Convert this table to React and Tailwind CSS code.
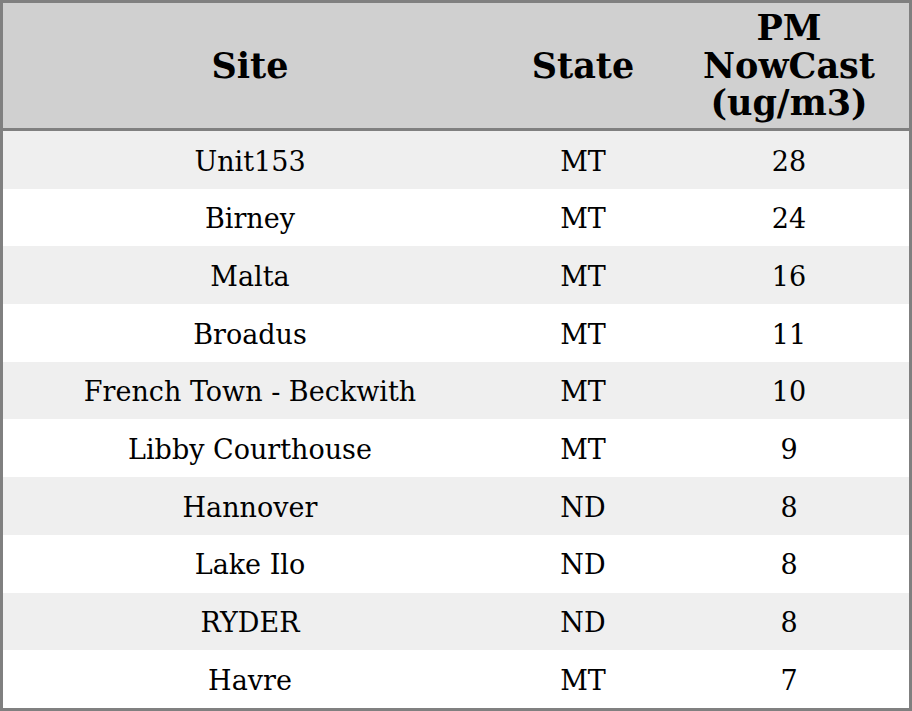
import React from 'react';

const rows = [
  ['Unit153', 'MT', 28],
  ['Birney', 'MT', 24],
  ['Malta', 'MT', 16],
  ['Broadus', 'MT', 11],
  ['French Town - Beckwith', 'MT', 10],
  ['Libby Courthouse', 'MT', 9],
  ['Hannover', 'ND', 8],
  ['Lake Ilo', 'ND', 8],
  ['RYDER', 'ND', 8],
  ['Havre', 'MT', 7],
];

export default function App() {
  return (
    <div className="w-[912px] h-[711px] border-[3px] border-[#808080] bg-white text-black font-['DejaVu_Serif',serif]">
      {/* Header */}
      <div className="grid grid-cols-[494px_172px_240px] h-[128px] bg-[#d0d0d0] border-b-[3px] border-[#808080] text-[35px] font-bold leading-[37.5px]">
        <div className="flex items-center justify-center text-center">Site</div>
        <div className="flex items-center justify-center text-center">State</div>
        <div className="flex items-center justify-center text-center">PM<br />NowCast<br />(ug/m3)</div>
      </div>

      {rows.map(([site, state, val], i) => (
        <div
          key={site}
          className={`grid grid-cols-[494px_172px_240px] h-[57.7px] pt-1 text-[27px] items-center text-center ${i % 2 === 0 ? 'bg-[#efefef]' : 'bg-white'}`}
        >
          <div>{site}</div>
          <div>{state}</div>
          <div>{val}</div>
        </div>
      ))}
    </div>
  );
}
